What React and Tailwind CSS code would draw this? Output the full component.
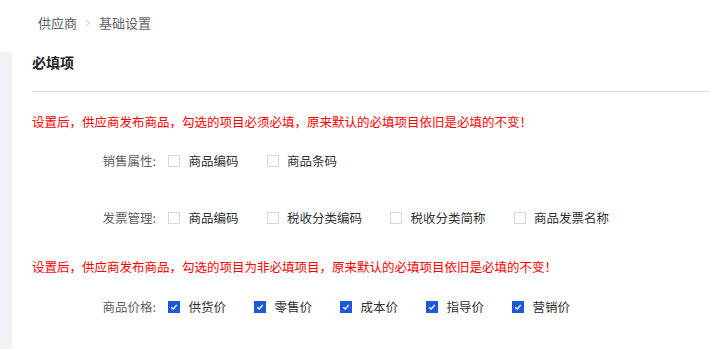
const rows1 = [
  { label: "销售属性:", items: ["商品编码", "商品条码"], checked: false },
  { label: "发票管理:", items: ["商品编码", "税收分类编码", "税收分类简称", "商品发票名称"], checked: false },
];

const priceRow = { label: "商品价格:", items: ["供货价", "零售价", "成本价", "指导价", "营销价"], checked: true };

function Box({ checked }) {
  if (checked) {
    return (
      <span className="w-[12px] h-[12px] bg-[#1b5bd7] flex items-center justify-center shrink-0">
        <svg width="8" height="8" viewBox="0 0 8 8" fill="none">
          <path d="M1.2 4.2 L3.2 6 L6.8 2" stroke="#fff" strokeWidth="1.3" />
        </svg>
      </span>
    );
  }
  return <span className="w-[12px] h-[12px] border border-[#d4d7de] bg-white shrink-0" />;
}

function Row({ row, className }) {
  return (
    <div className={"flex items-center h-[20px] " + className}>
      <div className="w-[124px] text-right text-[#606266]">{row.label}</div>
      <div className="flex items-center gap-[28px] ml-[12px]">
        {row.items.map((t) => (
          <label key={t} className="flex items-center">
            <Box checked={row.checked} />
            <span className="ml-[8.5px] text-[#303133]">{t}</span>
          </label>
        ))}
      </div>
    </div>
  );
}

export default function App() {
  return (
    <div className="w-full h-[349px] bg-white flex flex-col text-[12.5px] leading-[20px] font-['Noto_Sans_CJK_SC','Noto_Sans',sans-serif] overflow-hidden">
      {/* 面包屑 */}
      <div className="h-[52px] pl-[38px] pt-[13px] flex items-start text-[13px] text-[#606266]">
        <span>供应商</span>
        <span className="mx-[7px]">
          <svg width="8" height="20" viewBox="0 0 8 20" fill="none">
            <path d="M2 6.5 L5.5 10 L2 13.5" stroke="#b8bcc4" strokeWidth="1" />
          </svg>
        </span>
        <span>基础设置</span>
      </div>

      <div className="flex flex-1">
        <div className="w-[12px] bg-[#f0f2f5]" />
        <div className="flex-1 pl-[20px]">
          <div className="h-[40px] border-b border-[#dcdfe6] text-[14px] font-bold text-[#222]">必填项</div>

          <p className="mt-[20px] text-[#ff0000]">
            设置后，供应商发布商品，勾选的项目必须必填，原来默认的必填项目依旧是必填的不变！
          </p>

          <Row row={rows1[0]} className="mt-[19px]" />
          <Row row={rows1[1]} className="mt-[37px]" />

          <p className="mt-[29px] text-[#ff0000]">
            设置后，供应商发布商品，勾选的项目为非必填项目，原来默认的必填项目依旧是必填的不变！
          </p>

          <Row row={priceRow} className="mt-[20px]" />
        </div>
      </div>
    </div>
  );
}
